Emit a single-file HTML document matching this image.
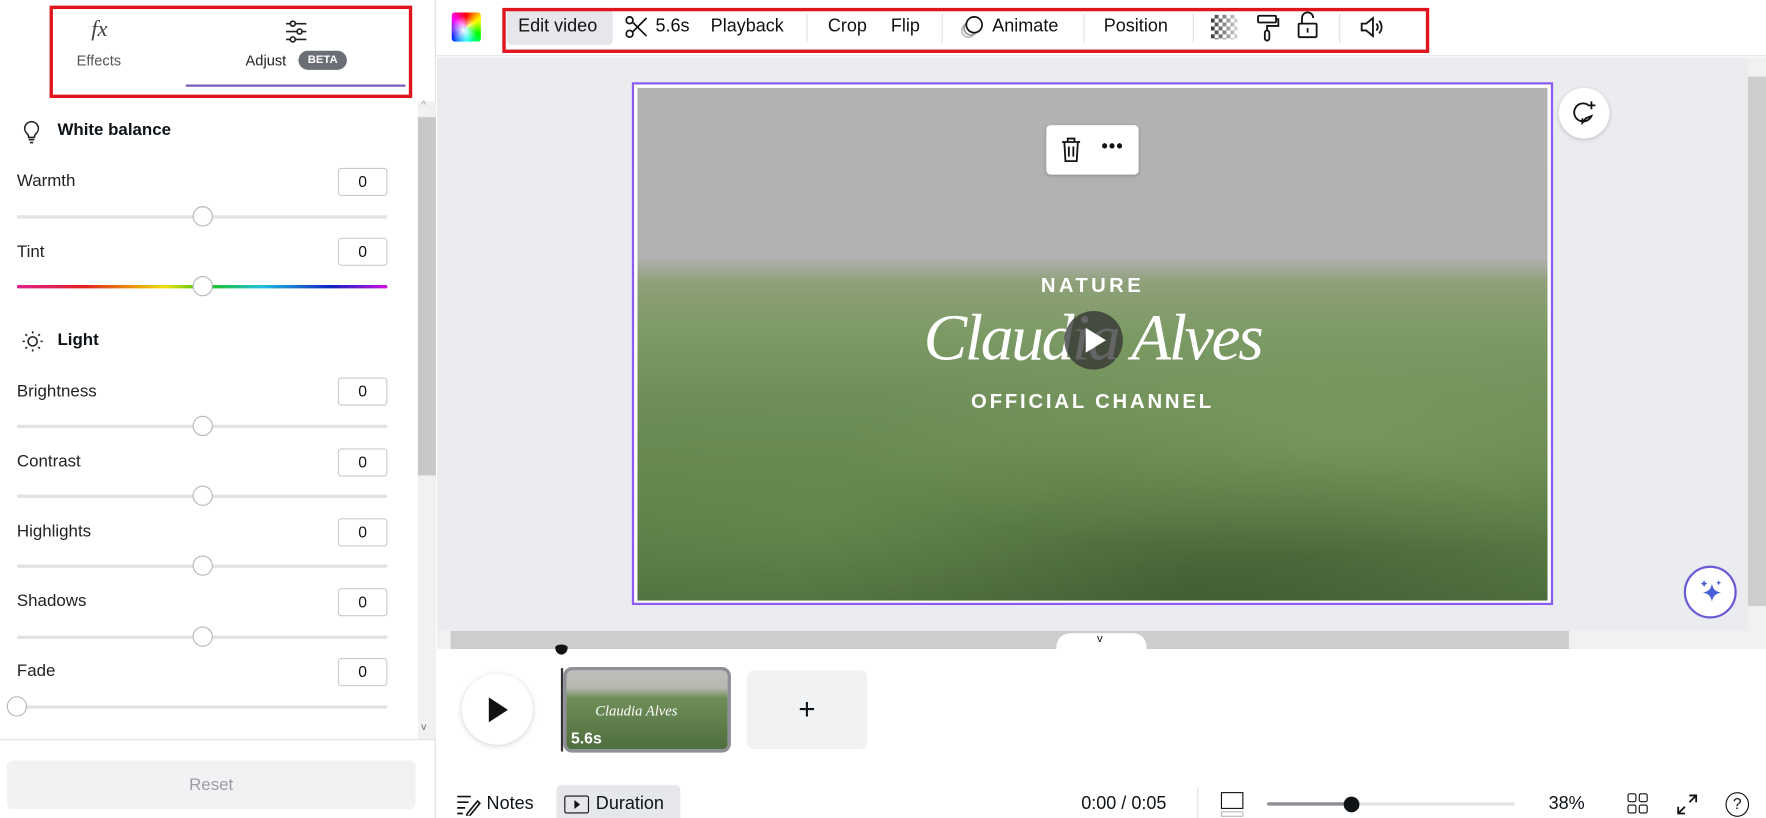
<!DOCTYPE html>
<html><head><meta charset="utf-8"><style>
*{box-sizing:border-box;margin:0;padding:0}
body{width:1766px;height:818px;overflow:hidden;background:#fff;font-family:"Liberation Sans",sans-serif;color:#0e1318}
#w{position:absolute;left:0;top:0;width:1568px;height:726px;transform:scale(1.12628,1.1267);transform-origin:0 0}
.a{position:absolute}
.lbl{position:absolute;left:15px;font-size:15px;color:#222}
.box{position:absolute;left:300px;width:44px;height:25px;border:1px solid #c9cbd0;border-radius:3px;font-size:14px;text-align:center;line-height:23px}
.trk{position:absolute;left:15px;width:329px;height:3px;background:#e2e3e6;border-radius:2px}
.th{position:absolute;width:18px;height:18px;border-radius:50%;background:#fff;border:1px solid #b5b7bc}
.tb{position:absolute;top:15px;font-size:16px;color:#111}
.sep{position:absolute;top:12px;width:1px;height:26px;background:#e0e1e4}
</style></head><body><div id="w">
<!-- sidebar -->
<div class="a" style="left:0;top:0;width:387px;height:726px;background:#fff;border-right:1px solid #e0e1e4"></div>
<div class="a" style="left:81px;top:15px;font-size:20px;font-style:italic;font-family:'Liberation Serif',serif;color:#444">fx</div>
<div class="a" style="left:68px;top:46px;font-size:13px;color:#555">Effects</div>
<svg class="a" style="left:251px;top:16px" width="24" height="24" viewBox="0 0 24 24" fill="none" stroke="#222" stroke-width="1.5"><path d="M3 5h18M3 12h18M3 19h18"/><circle cx="9" cy="5" r="2.2" fill="#fff"/><circle cx="15" cy="12" r="2.2" fill="#fff"/><circle cx="9" cy="19" r="2.2" fill="#fff"/></svg>
<div class="a" style="left:218px;top:46px;font-size:13px;color:#222">Adjust</div>
<div class="a" style="left:265px;top:45px;width:43px;height:17px;border-radius:9px;background:#6b6e74;color:#fff;font-size:10px;font-weight:bold;text-align:center;line-height:17px">BETA</div>
<div class="a" style="left:165px;top:75px;width:195px;height:2px;background:#7d5bbe"></div>
<div class="a" style="left:44px;top:5px;width:322px;height:82px;border:3px solid #e0141c"></div>
<div class="a" style="left:371px;top:90px;width:16px;height:566px;background:#f1f1f1"></div>
<div class="a" style="left:371px;top:104px;width:16px;height:318px;background:#c8c8c8"></div>
<div class="a" style="left:374px;top:88px;font-size:9px;color:#999">^</div>
<div class="a" style="left:374px;top:640px;font-size:9px;color:#666">v</div>
<svg class="a" style="left:19px;top:106px" width="18" height="22" viewBox="0 0 18 22" fill="none" stroke="#222" stroke-width="1.4"><path d="M9 2a6 6 0 0 0-4 10.5c1 1 1.5 2 1.5 3.5h5c0-1.5.5-2.5 1.5-3.5A6 6 0 0 0 9 2zM6.5 18h5M7.5 20.5h3"/></svg>
<div class="a" style="left:51px;top:107px;font-size:15px;font-weight:bold">White balance</div>
<div class="lbl" style="top:152px">Warmth</div><div class="box" style="top:149px">0</div>
<div class="trk" style="top:191px"></div><div class="th" style="left:171px;top:183px"></div>
<div class="lbl" style="top:215px">Tint</div><div class="box" style="top:211px">0</div>
<div class="trk" style="top:253px;background:linear-gradient(90deg,#e0208f,#e02020 18%,#f0e000 40%,#20c020 52%,#20c0e0 66%,#1020c0 85%,#d010e0)"></div><div class="th" style="left:171px;top:245px"></div>
<svg class="a" style="left:18px;top:292px" width="22" height="22" viewBox="0 0 22 22" fill="none" stroke="#222" stroke-width="1.4"><circle cx="11" cy="11" r="4"/><path d="M11 2v2M11 18v2M2 11h2M18 11h2M4.6 4.6l1.4 1.4M16 16l1.4 1.4M4.6 17.4 6 16M16 6l1.4-1.4"/></svg>
<div class="a" style="left:51px;top:293px;font-size:15px;font-weight:bold">Light</div>
<div class="lbl" style="top:339px">Brightness</div><div class="box" style="top:335px">0</div>
<div class="trk" style="top:377px"></div><div class="th" style="left:171px;top:369px"></div>
<div class="lbl" style="top:401px">Contrast</div><div class="box" style="top:398px">0</div>
<div class="trk" style="top:439px"></div><div class="th" style="left:171px;top:431px"></div>
<div class="lbl" style="top:463px">Highlights</div><div class="box" style="top:460px">0</div>
<div class="trk" style="top:501px"></div><div class="th" style="left:171px;top:493px"></div>
<div class="lbl" style="top:525px">Shadows</div><div class="box" style="top:522px">0</div>
<div class="trk" style="top:564px"></div><div class="th" style="left:171px;top:556px"></div>
<div class="lbl" style="top:587px">Fade</div><div class="box" style="top:584px">0</div>
<div class="trk" style="top:626px"></div><div class="th" style="left:6px;top:618px"></div>
<div class="a" style="left:0;top:656px;width:387px;height:1px;background:#e0e1e4"></div>
<div class="a" style="left:6px;top:675px;width:363px;height:43px;border-radius:5px;background:#f1f2f4;color:#9a9ca1;font-size:15px;text-align:center;line-height:43px">Reset</div>
<!-- top bar -->
<div class="a" style="left:388px;top:0;width:1180px;height:50px;background:#fff;border-bottom:1px solid #e0e1e4"></div>
<div class="a" style="left:401px;top:11px;width:26px;height:26px;border-radius:3px;background:radial-gradient(circle at 40% 60%,#fff 0,rgba(255,255,255,0) 55%),conic-gradient(#f00,#ff0,#0f0,#0ff,#00f,#f0f,#f00)"></div>
<div class="a" style="left:450px;top:9px;width:94px;height:31px;background:#e5e7eb;border-radius:4px"></div>
<div class="tb" style="left:460px">Edit video</div>
<svg class="a" style="left:554px;top:13px" width="22" height="22" viewBox="0 0 22 22" fill="none" stroke="#111" stroke-width="1.5"><circle cx="5" cy="5" r="3"/><circle cx="5" cy="17" r="3"/><path d="M7.5 6.5 20 19M7.5 15.5 20 3"/></svg>
<div class="tb" style="left:582px">5.6s</div>
<div class="tb" style="left:631px">Playback</div>
<div class="sep" style="left:716px"></div>
<div class="tb" style="left:735px">Crop</div>
<div class="tb" style="left:791px">Flip</div>
<div class="sep" style="left:836px"></div>
<svg class="a" style="left:852px;top:12px" width="24" height="24" viewBox="0 0 24 24" fill="none" stroke-width="1.5"><circle cx="8" cy="15" r="6" stroke="#bbb"/><circle cx="10" cy="13" r="6" stroke="#999"/><circle cx="13" cy="10" r="7" stroke="#111" fill="#fff"/></svg>
<div class="tb" style="left:881px">Animate</div>
<div class="sep" style="left:962px"></div>
<div class="tb" style="left:980px">Position</div>
<div class="sep" style="left:1059px"></div>
<div class="a" style="left:1075px;top:13px;width:24px;height:22px;background:repeating-conic-gradient(#333 0 25%,#fff 0 50%) 0 0/7px 7px;-webkit-mask:linear-gradient(90deg,#000,rgba(0,0,0,.2))"></div>
<svg class="a" style="left:1114px;top:12px" width="24" height="26" viewBox="0 0 24 26" fill="none" stroke="#111" stroke-width="1.6"><rect x="3" y="2" width="16" height="6" rx="1"/><path d="M19 5h2v6H11v4"/><rect x="9" y="15" width="4" height="9" rx="2"/></svg>
<svg class="a" style="left:1150px;top:10px" width="22" height="26" viewBox="0 0 22 26" fill="none" stroke="#111" stroke-width="1.6"><path d="M6 11V6a5 5 0 0 1 10 0"/><rect x="3" y="11" width="16" height="12" rx="1"/><path d="M11 15v4"/></svg>
<div class="sep" style="left:1189px"></div>
<svg class="a" style="left:1206px;top:13px" width="24" height="22" viewBox="0 0 24 22" fill="none" stroke="#111" stroke-width="1.6"><path d="M3 8h4l6-5v16l-6-5H3z"/><path d="M16 8a4 4 0 0 1 0 6M18.5 5.5a8 8 0 0 1 0 11"/></svg>
<div class="a" style="left:446px;top:7px;width:823px;height:40px;border:3px solid #e0141c"></div>
<!-- canvas -->
<div class="a" style="left:388px;top:51px;width:1164px;height:509px;background:#ebecf0"></div>
<div class="a" style="left:1552px;top:51px;width:16px;height:509px;background:#f1f1f1"></div>
<div class="a" style="left:1552px;top:68px;width:16px;height:470px;background:#cdcdcd"></div>
<div class="a" style="left:388px;top:560px;width:1180px;height:16px;background:#f1f1f1"></div>
<div class="a" style="left:400px;top:560px;width:993px;height:16px;background:#cdcdcd"></div>
<div class="a" style="left:938px;top:562px;width:80px;height:16px;background:#fff;border-radius:12px 12px 0 0"></div>
<div class="a" style="left:974px;top:562px;font-size:10px">v</div>
<div class="a" style="left:561px;top:73px;width:818px;height:464px;border:2px solid #8b5cf6;padding:3px;background:#fff"></div>
<div class="a" style="left:566px;top:78px;width:808px;height:455px;background:linear-gradient(180deg,#b2b2b2 0,#b1b1b0 33%,#8fa07a 38%,#7c9a64 48%,#6f8e59 60%,#5f7f48 80%,#4f6e3e 100%)"></div>
<div class="a" style="left:566px;top:300px;width:808px;height:233px;background:radial-gradient(ellipse at 75% 40%,rgba(150,180,110,.35),rgba(0,0,0,0) 50%),radial-gradient(ellipse at 20% 70%,rgba(120,160,90,.3),rgba(0,0,0,0) 50%),radial-gradient(ellipse at 60% 95%,rgba(30,50,25,.3),rgba(0,0,0,0) 50%)"></div>
<div class="a" style="left:929px;top:111px;width:82px;height:44px;background:#fff;border-radius:4px;box-shadow:0 1px 3px rgba(0,0,0,.2)"></div>
<svg class="a" style="left:940px;top:121px" width="22" height="24" viewBox="0 0 22 24" fill="none" stroke="#111" stroke-width="1.6"><path d="M3 5h16M8 5V2h6v3M5 5l1 17h10l1-17M9 9v9M13 9v9"/></svg>
<div class="a" style="left:978px;top:122px;font-size:16px;font-weight:bold;letter-spacing:1px">•••</div>
<div class="a" style="left:566px;top:243px;width:808px;text-align:center;color:#fff;font-weight:bold;font-size:18px;letter-spacing:3px">NATURE</div>
<div class="a" style="left:566px;top:266px;width:808px;text-align:center;color:#fff;font-size:58px;font-style:italic;font-family:'Liberation Serif',cursive;letter-spacing:-2px">Claudia Alves</div>
<div class="a" style="left:945px;top:276px;width:52px;height:52px;border-radius:50%;background:rgba(50,50,50,.75)"></div>
<div class="a" style="left:964px;top:291px;width:0;height:0;border-left:18px solid #fff;border-top:11px solid transparent;border-bottom:11px solid transparent"></div>
<div class="a" style="left:566px;top:346px;width:808px;text-align:center;color:#fff;font-weight:bold;font-size:18px;letter-spacing:2.5px">OFFICIAL CHANNEL</div>
<div class="a" style="left:1384px;top:78px;width:45px;height:45px;border-radius:50%;background:#fff;box-shadow:0 1px 4px rgba(0,0,0,.2)"></div>
<svg class="a" style="left:1394px;top:88px" width="26" height="26" viewBox="0 0 26 26" fill="none" stroke="#111" stroke-width="1.6"><path d="M16 5a8 8 0 1 0 3 10l-5 2-3 4v-4"/><path d="M19 2v7M15.5 5.5h7"/></svg>
<div class="a" style="left:1495px;top:502px;width:47px;height:47px;border-radius:50%;background:#fff;border:2px solid #6b5bd6"></div>
<svg class="a" style="left:1505px;top:512px" width="28" height="28" viewBox="0 0 28 28" fill="#4a5fd6"><path d="M15 6c1 5 3 7 8 8-5 1-7 3-8 8-1-5-3-7-8-8 5-1 7-3 8-8z"/><path d="M8 3l1 2 2 1-2 1-1 2-1-2-2-1 2-1zM21 3l.7 1.5 1.5.7-1.5.7L21 7.5l-.7-1.6-1.5-.7 1.5-.7z"/></svg>
<!-- timeline -->
<div class="a" style="left:493px;top:572px;width:11px;height:9px;background:#111;border-radius:50% 50% 50% 50%/30% 30% 70% 70%"></div>
<div class="a" style="left:410px;top:598px;width:63px;height:63px;border-radius:50%;background:#fff;box-shadow:0 1px 5px rgba(0,0,0,.18)"></div>
<div class="a" style="left:434px;top:619px;width:0;height:0;border-left:17px solid #111;border-top:11px solid transparent;border-bottom:11px solid transparent"></div>
<div class="a" style="left:498px;top:593px;width:2px;height:74px;background:#333"></div>
<div class="a" style="left:500px;top:592px;width:149px;height:76px;border:3px solid #8e9096;border-radius:8px;background:linear-gradient(180deg,#bdbdbd 0,#b8b8b0 22%,#6f8e59 35%,#4f6e3e 100%);overflow:hidden"></div>
<div class="a" style="left:505px;top:623px;width:120px;text-align:center;color:#fff;font-style:italic;font-size:13px;font-family:'Liberation Serif',serif">Claudia Alves</div>
<div class="a" style="left:507px;top:647px;color:#fff;font-weight:bold;font-size:14px">5.6s</div>
<div class="a" style="left:663px;top:595px;width:107px;height:70px;background:#f1f2f4;border-radius:6px;text-align:center;line-height:68px;font-size:26px;font-weight:300">+</div>
<svg class="a" style="left:404px;top:704px" width="24" height="20" viewBox="0 0 24 20" fill="none" stroke="#111" stroke-width="1.5"><path d="M2 3h12M2 8h10M2 13h7M2 18h5M11 18l9-11 2 2-9 11-3 1z"/></svg>
<div class="a" style="left:432px;top:705px;font-size:16px">Notes</div>
<div class="a" style="left:494px;top:697px;width:110px;height:29px;background:#e5e7eb;border-radius:4px 4px 0 0"></div>
<div class="a" style="left:501px;top:706px;width:22px;height:16px;border:1.5px solid #111;border-radius:2px"></div>
<div class="a" style="left:510px;top:710px;border-left:5px solid #111;border-top:4px solid transparent;border-bottom:4px solid transparent"></div>
<div class="a" style="left:529px;top:705px;font-size:16px">Duration</div>
<div class="a" style="left:960px;top:705px;font-size:16px">0:00 / 0:05</div>
<div class="a" style="left:1063px;top:699px;width:1px;height:27px;background:#e0e1e4"></div>
<div class="a" style="left:1084px;top:703px;width:20px;height:15px;border:1.5px solid #111"></div>
<div class="a" style="left:1084px;top:720px;width:20px;height:5px;border:1px solid #bbb"></div>
<div class="a" style="left:1125px;top:712px;width:220px;height:3px;background:#e2e3e6;border-radius:2px"></div>
<div class="a" style="left:1125px;top:712px;width:75px;height:3px;background:#8e9096;border-radius:2px"></div>
<div class="a" style="left:1193px;top:707px;width:14px;height:14px;border-radius:50%;background:#0e1318"></div>
<div class="a" style="left:1375px;top:705px;font-size:16px">38%</div>
<div class="a" style="left:1445px;top:704px;width:8px;height:8px;border:1.5px solid #111;border-radius:2px"></div>
<div class="a" style="left:1455px;top:704px;width:8px;height:8px;border:1.5px solid #111;border-radius:2px"></div>
<div class="a" style="left:1445px;top:714px;width:8px;height:8px;border:1.5px solid #111;border-radius:2px"></div>
<div class="a" style="left:1455px;top:714px;width:8px;height:8px;border:1.5px solid #111;border-radius:2px"></div>
<svg class="a" style="left:1488px;top:704px" width="20" height="20" viewBox="0 0 20 20" fill="none" stroke="#111" stroke-width="1.6"><path d="M12 2h6v6M18 2l-6 6M8 18H2v-6M2 18l6-6"/></svg>
<div class="a" style="left:1532px;top:703px;width:21px;height:22px;border:1.5px solid #111;border-radius:50%;text-align:center;font-size:14px;line-height:19px">?</div>
</div></body></html>
